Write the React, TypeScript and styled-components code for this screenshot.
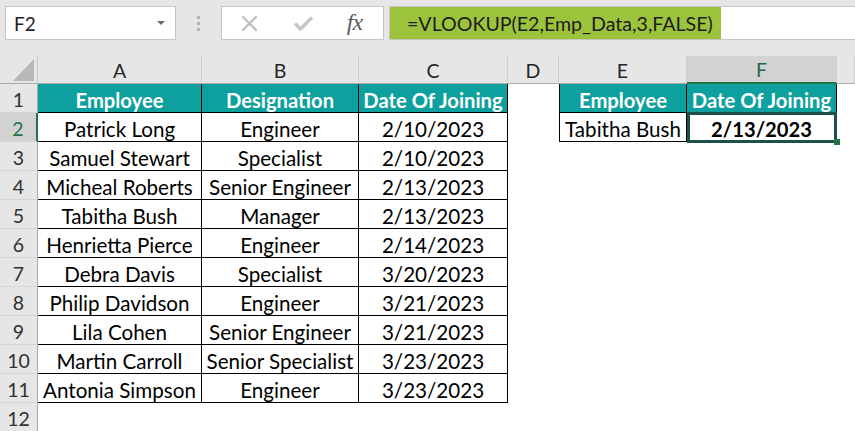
import React from 'react';
import styled, { createGlobalStyle, css } from 'styled-components';

const GlobalStyle = createGlobalStyle`
  * { box-sizing: border-box; }
  html, body { margin: 0; padding: 0; background: #ffffff; }
  body { font-family: Lato, "Noto Sans", sans-serif; overflow: hidden; }
`;

const Page = styled.div`
  width: 855px;
  height: 431px;
  overflow: hidden;
  display: flex;
  flex-direction: column;
  background: #fff;
`;

const Toolbar = styled.div`
  height: 56px;
  flex: none;
  background: #e6e6e6;
  display: flex;
  align-items: flex-start;
  padding: 6px 0 0 5px;
`;

const NameBox = styled.div`
  width: 171px;
  height: 34px;
  flex: none;
  background: #fff;
  border: 1px solid #c6c6c6;
  display: flex;
  align-items: center;
  justify-content: space-between;
  padding: 0 10px 0 8px;
  font-size: 19px;
  color: #222;
`;

const Caret = styled.span`
  width: 0;
  height: 0;
  border-left: 4px solid transparent;
  border-right: 4px solid transparent;
  border-top: 4px solid #6a6a6a;
`;

const Grip = styled.div`
  width: 45px;
  height: 34px;
  flex: none;
  display: flex;
  flex-direction: column;
  align-items: center;
  justify-content: center;
  gap: 3px;
`;

const GripDot = styled.span`
  width: 3px;
  height: 3px;
  background: #b3b3b3;
`;

const FormulaButtons = styled.div`
  width: 163px;
  height: 34px;
  flex: none;
  background: #fff;
  border: 1px solid #c6c6c6;
  display: grid;
  grid-template-columns: 54px 54px 1fr;
  align-items: center;
  justify-items: center;
`;

const Fx = styled.span`
  font-family: "Liberation Serif", "DejaVu Serif", serif;
  font-style: italic;
  font-size: 24px;
  color: #5c5c5c;
  margin-right: 4px;
  margin-top: -2px;
  letter-spacing: -1px;
`;

const FormulaInput = styled.div`
  flex: 1;
  height: 34px;
  margin-left: 5px;
  margin-right: -4px;
  background: #fff;
  border: 1px solid #c6c6c6;
  display: flex;
`;

const FormulaHighlight = styled.div`
  width: 331px;
  height: 100%;
  background: #9cc33c;
  display: flex;
  align-items: center;
  padding-left: 17px;
  font-size: 19.6px;
  color: #1c1c1c;
  white-space: nowrap;
`;

const Sheet = styled.div`
  flex: 1;
  display: grid;
  grid-template-columns: 38px 164px 157px 149px 51px 128px 150px 1fr;
  grid-template-rows: 28px;
  grid-auto-rows: 29px;
`;

const Corner = styled.div`
  background: #e6e6e6;
  border-right: 1px solid #c8c8c8;
  border-bottom: 1px solid #ababab;
  display: flex;
  align-items: flex-end;
  justify-content: flex-end;
  padding: 0 3px 2px 0;
`;

const CornerTriangle = styled.div`
  width: 21px;
  height: 22px;
  background: #b9b9b9;
  clip-path: polygon(100% 0, 100% 100%, 0 100%);
`;

const ColHeader = styled.div<{ $active?: boolean }>`
  background: ${(p) => (p.$active ? '#d2d2d2' : '#e6e6e6')};
  border-right: 1px solid #cfcfcf;
  border-bottom: ${(p) => (p.$active ? '2px solid #217346' : '1px solid #ababab')};
  display: flex;
  align-items: center;
  justify-content: center;
  padding-top: 1px;
  font-size: 19.5px;
  color: ${(p) => (p.$active ? '#1f6a45' : '#262626')};
`;

const RowHeader = styled.div<{ $active?: boolean }>`
  background: ${(p) => (p.$active ? '#d2d2d2' : '#e6e6e6')};
  border-right: ${(p) => (p.$active ? '2px solid #217346' : '1px solid #ababab')};
  border-bottom: 1px solid #d5d5d5;
  display: flex;
  align-items: center;
  justify-content: center;
  padding-top: 2px;
  font-size: 19.5px;
  color: ${(p) => (p.$active ? '#217346' : '#303030')};
`;

type CellProps = {
  $head?: boolean;
  $border?: boolean;
  $left?: boolean;
  $bold?: boolean;
  $selected?: boolean;
};

const Cell = styled.div<CellProps>`
  display: flex;
  align-items: center;
  justify-content: center;
  padding-top: 3px;
  font-size: 20.6px;
  color: #000;
  white-space: nowrap;
  background: ${(p) => (p.$head ? '#0ea09e' : '#fff')};
  ${(p) =>
    p.$head &&
    css`
      color: #fff;
      font-weight: 700;
      font-size: 20.2px;
    `}
  ${(p) =>
    p.$bold &&
    css`
      font-weight: 700;
      font-size: 20.2px;
    `}
  ${(p) =>
    p.$border &&
    css`
      border-right: 1px solid #000;
      border-bottom: 1px solid #000;
    `}
  ${(p) =>
    p.$left &&
    css`
      border-left: 1px solid #000;
    `}
  ${(p) =>
    p.$selected &&
    css`
      position: relative;
      z-index: 1;
      &::after {
        content: '';
        position: absolute;
        top: -1px;
        left: 0;
        right: -1px;
        bottom: -2px;
        border: 3px solid #1d504c;
        pointer-events: none;
      }
      &::before {
        content: '';
        position: absolute;
        right: -4px;
        bottom: -4px;
        width: 6px;
        height: 6px;
        background: #217346;
        z-index: 2;
      }
    `}
`;

const XIcon = () => (
  <svg width="17" height="17" viewBox="0 0 17 17">
    <path d="M2 2 L15 15 M15 2 L2 15" stroke="#bdbdbd" strokeWidth="2.2" strokeLinecap="round" />
  </svg>
);

const CheckIcon = () => (
  <svg width="21" height="16" viewBox="0 0 21 16">
    <path d="M2 8.5 L7.5 14 L19 2.5" stroke="#c6c6c6" strokeWidth="3.4" fill="none" strokeLinejoin="round" />
  </svg>
);

const columns = ['A', 'B', 'C', 'D', 'E', 'F'];

const data: [string, string, string][] = [
  ['Patrick Long', 'Engineer', '2/10/2023'],
  ['Samuel Stewart', 'Specialist', '2/10/2023'],
  ['Micheal Roberts', 'Senior Engineer', '2/13/2023'],
  ['Tabitha Bush', 'Manager', '2/13/2023'],
  ['Henrietta Pierce', 'Engineer', '2/14/2023'],
  ['Debra Davis', 'Specialist', '3/20/2023'],
  ['Philip Davidson', 'Engineer', '3/21/2023'],
  ['Lila Cohen', 'Senior Engineer', '3/21/2023'],
  ['Martin Carroll', 'Senior Specialist', '3/23/2023'],
  ['Antonia Simpson', 'Engineer', '3/23/2023'],
];

export default function App() {
  const rows: React.ReactNode[] = [];

  rows.push(
    <React.Fragment key="r1">
      <RowHeader>1</RowHeader>
      <Cell $head $border>Employee</Cell>
      <Cell $head $border>Designation</Cell>
      <Cell $head $border>Date Of Joining</Cell>
      <Cell />
      <Cell $head $border $left>Employee</Cell>
      <Cell $head $border>Date Of Joining</Cell>
      <Cell />
    </React.Fragment>
  );

  data.forEach((d, i) => {
    const r = i + 2;
    rows.push(
      <React.Fragment key={`r${r}`}>
        <RowHeader $active={r === 2}>{r}</RowHeader>
        <Cell $border>{d[0]}</Cell>
        <Cell $border>{d[1]}</Cell>
        <Cell $border>{d[2]}</Cell>
        <Cell />
        {r === 2 ? (
          <>
            <Cell $border $left>Tabitha Bush</Cell>
            <Cell $border $bold $selected>2/13/2023</Cell>
          </>
        ) : (
          <>
            <Cell />
            <Cell />
          </>
        )}
        <Cell />
      </React.Fragment>
    );
  });

  rows.push(
    <React.Fragment key="r12">
      <RowHeader>12</RowHeader>
      <Cell />
      <Cell />
      <Cell />
      <Cell />
      <Cell />
      <Cell />
      <Cell />
    </React.Fragment>
  );

  return (
    <>
      <GlobalStyle />
      <Page>
        <Toolbar>
          <NameBox>
            <span>F2</span>
            <Caret />
          </NameBox>
          <Grip>
            <GripDot />
            <GripDot />
            <GripDot />
          </Grip>
          <FormulaButtons>
            <XIcon />
            <CheckIcon />
            <Fx>fx</Fx>
          </FormulaButtons>
          <FormulaInput>
            <FormulaHighlight>=VLOOKUP(E2,Emp_Data,3,FALSE)</FormulaHighlight>
          </FormulaInput>
        </Toolbar>
        <Sheet>
          <Corner>
            <CornerTriangle />
          </Corner>
          {columns.map((c) => (
            <ColHeader key={c} $active={c === 'F'}>
              {c}
            </ColHeader>
          ))}
          <ColHeader />
          {rows}
        </Sheet>
      </Page>
    </>
  );
}
